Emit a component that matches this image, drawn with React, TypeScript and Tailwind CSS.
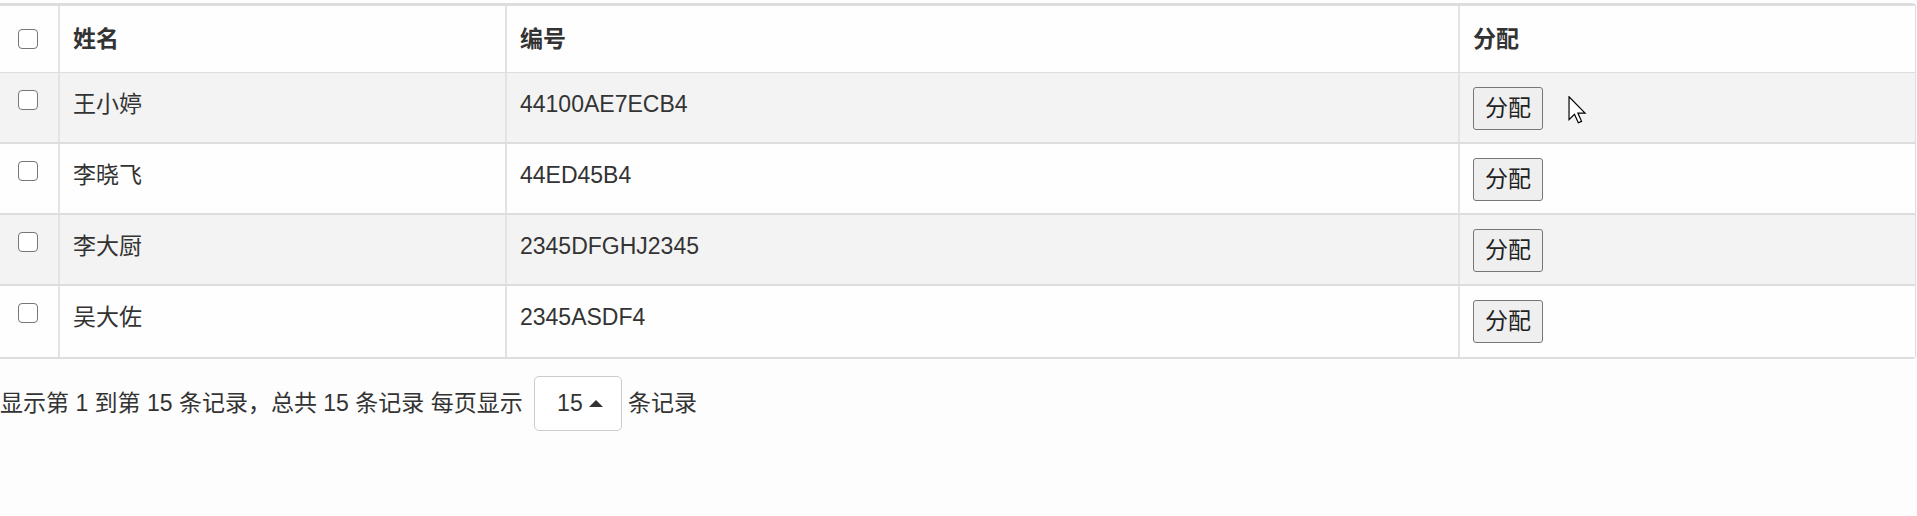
import React from "react";

const rows = [
  { name: "王小婷", code: "44100AE7ECB4" },
  { name: "李晓飞", code: "44ED45B4" },
  { name: "李大厨", code: "2345DFGHJ2345" },
  { name: "吴大佐", code: "2345ASDF4" },
];

function Check() {
  return <div className="w-[20px] h-[20px] rounded-[4px] border-[1.5px] border-[#767676] bg-white" />;
}

function Cursor() {
  return (
    <svg width="19" height="28" viewBox="0 0 12.5 19" className="absolute left-[1568px] top-[96px]">
      <path
        d="M0.5 0.5 L0.5 16 L4.2 12.4 L6.8 18.2 L9 17.2 L6.5 11.6 L11.4 11.6 Z"
        fill="#fff"
        stroke="#000"
        strokeWidth="0.8"
        strokeLinejoin="miter"
      />
    </svg>
  );
}

export default function App() {
  return (
    <div
      className="relative w-[1917px] h-[516px] bg-[#fdfdfd] text-[#333] text-[23px] leading-[33px]"
      style={{ fontFamily: '"Liberation Sans", "Noto Sans CJK SC", sans-serif' }}
    >
      <div className="pt-[3px]">
        <div className="border-t-[3px] border-b-[2px] border-r border-[#dddddd] rounded-r-[4px] w-[1916px]">
          {/* header */}
          <div className="grid grid-cols-[58px_447px_953px_1fr] h-[67px] border-b border-[#dddddd] bg-[#fefefe]">
            <div className="flex items-center pl-[18px] pb-[1px]">
              <Check />
            </div>
            <div className="border-l-2 border-[#e3e3e3] flex items-center pl-[13px] font-bold">姓名</div>
            <div className="border-l-2 border-[#e3e3e3] flex items-center pl-[13px] font-bold">编号</div>
            <div className="border-l-2 border-[#e3e3e3] flex items-center pl-[13px] font-bold">分配</div>
          </div>
          {rows.map((r, i) => (
            <div
              key={i}
              className={
                "grid grid-cols-[58px_447px_953px_1fr] h-[71px] " +
                (i < rows.length - 1 ? "border-b-2 border-[#dddddd] " : "") +
                (i % 2 === 0 ? "bg-[#f3f3f3]" : "bg-[#fefefe]")
              }
            >
              <div className="pl-[18px] pt-[17px]">
                <Check />
              </div>
              <div className="border-l-2 border-[#e3e3e3] pl-[13px] pt-[15px]">{r.name}</div>
              <div className="border-l-2 border-[#e3e3e3] pl-[13px] pt-[15px]">{r.code}</div>
              <div className="border-l-2 border-[#e3e3e3] pl-[13px] pt-[14px]">
                <button className="w-[70px] h-[43px] rounded-[3px] border border-[#767676] bg-[#efefef] text-[#222] text-[23px] leading-none flex items-center justify-center">
                  分配
                </button>
              </div>
            </div>
          ))}
        </div>
      </div>
      <div className="flex items-center mt-[17px]">
        <span className="whitespace-pre">显示第 1 到第 15 条记录，总共 15 条记录 每页显示 </span>
        <div className="ml-[5px] w-[88px] h-[55px] border border-[#cccccc] rounded-[5px] bg-white flex items-center pl-[22px] gap-[6px]">
          <span>15</span>
          <svg width="14" height="7" viewBox="0 0 14 7">
            <path d="M0 7 L7 0 L14 7 Z" fill="#333" />
          </svg>
        </div>
        <span className="ml-[6px]">条记录</span>
      </div>
      <Cursor />
    </div>
  );
}
